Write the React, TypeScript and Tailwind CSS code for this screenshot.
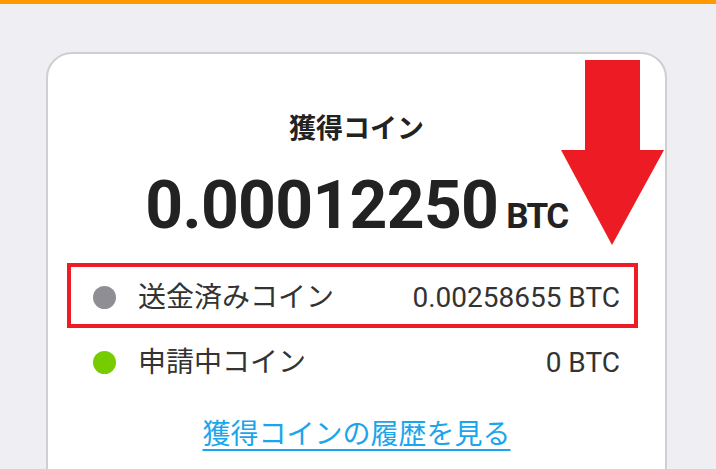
const rows = [
  { label: '送金済みコイン', value: '0.00258655 BTC', dot: 'bg-[#8f8e94]', marked: true },
  { label: '申請中コイン', value: '0 BTC', dot: 'bg-[#77cc00]', marked: false },
];

const jp = 'font-["Roboto","Noto_Sans_CJK_JP",sans-serif]';

export default function App() {
  return (
    <div className={`relative h-[469px] w-[716px] overflow-hidden bg-[#efeef3] ${jp}`}>
      <div className="h-1 bg-[#ff9900]" />

      <div className="ml-[46px] mt-[48px] h-[480px] w-[621px] rounded-[26px] border-2 border-[#cfcfd1] bg-white">
        <h2 className="mt-[57px] text-center text-[27px] font-bold leading-[36px] text-[#222]">獲得コイン</h2>

        <div className="mt-[26px] flex items-baseline justify-center gap-[8px] text-[#222]">
          <span className="text-[66px] font-bold leading-[66px] tracking-[-0.7px]">0.00012250</span>
          <span className="text-[35px] font-bold leading-[34px] tracking-[-1.5px]">BTC</span>
        </div>

        <div className="mt-[24px] ml-[19px] mr-[27px]">
          {rows.map((r) => (
            <div
              key={r.label}
              className={`flex h-[65px] items-center border-4 pl-[22px] pr-[14px] pt-[4px] ${r.marked ? 'border-[#ee1c25]' : 'border-transparent'}`}
            >
              <span className={`h-[23px] w-[23px] rounded-full ${r.dot}`} />
              <span className="ml-[22px] text-[28px] leading-none text-[#333]">{r.label}</span>
              <span className="ml-auto text-[28px] leading-none text-[#333]">{r.value}</span>
            </div>
          ))}
        </div>

        <div className="mt-[28px] text-center">
          <a href="#" className="text-[28px] leading-none text-[#1aa6ec] underline decoration-2 underline-offset-[5px]">
            獲得コインの履歴を見る
          </a>
        </div>
      </div>

      <svg className="absolute left-0 top-0" width="716" height="469" viewBox="0 0 716 469">
        <polygon points="585,60 640,60 640,150 664,150 612,245 561,150 585,150" fill="#ed1c24" />
      </svg>
    </div>
  );
}
